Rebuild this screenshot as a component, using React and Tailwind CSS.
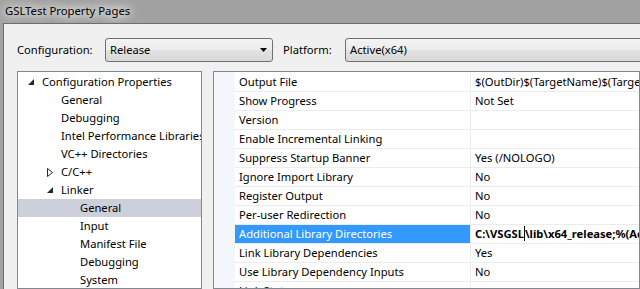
import React from "react";

const font = { fontFamily: '"Noto Sans", "Open Sans", sans-serif' };

function Arrow() {
  return (
    <svg width="7" height="4" viewBox="0 0 7 4" className="shrink-0">
      <path d="M0 0H7L3.5 4Z" fill="#000" />
    </svg>
  );
}

function Combo({ text, className, arrow }) {
  return (
    <div
      className={
        "h-[24px] shrink-0 flex items-center rounded-[3px] border border-[#707070] bg-[linear-gradient(#f3f3f3_0%,#ececec_50%,#e2e2e2_51%,#d9d9d9_100%)] pl-[4px] pr-[5px] " +
        className
      }
    >
      <span className="flex-1 text-black">{text}</span>
      {arrow && <Arrow />}
    </div>
  );
}

function Expanded() {
  return (
    <svg width="6" height="6" viewBox="0 0 6 6">
      <path d="M6 0V6H0Z" fill="#262626" />
    </svg>
  );
}

function Collapsed() {
  return (
    <svg width="6" height="9" viewBox="0 0 6 9">
      <path d="M0.5 0.5L5.5 4.5L0.5 8.5Z" fill="none" stroke="#262626" strokeWidth="1" />
    </svg>
  );
}

const tree = [
  { t: "Configuration Properties", lvl: 0, icon: "exp" },
  { t: "General", lvl: 1 },
  { t: "Debugging", lvl: 1 },
  { t: "Intel Performance Libraries", lvl: 1 },
  { t: "VC++ Directories", lvl: 1 },
  { t: "C/C++", lvl: 1, icon: "col" },
  { t: "Linker", lvl: 1, icon: "exp" },
  { t: "General", lvl: 2, sel: true },
  { t: "Input", lvl: 2 },
  { t: "Manifest File", lvl: 2 },
  { t: "Debugging", lvl: 2 },
  { t: "System", lvl: 2 },
  { t: "Optimization", lvl: 2 },
];

const props = [
  ["Output File", "$(OutDir)$(TargetName)$(TargetExt)"],
  ["Show Progress", "Not Set"],
  ["Version", ""],
  ["Enable Incremental Linking", ""],
  ["Suppress Startup Banner", "Yes (/NOLOGO)"],
  ["Ignore Import Library", "No"],
  ["Register Output", "No"],
  ["Per-user Redirection", "No"],
  ["Additional Library Directories", "SEL"],
  ["Link Library Dependencies", "Yes"],
  ["Use Library Dependency Inputs", "No"],
  ["Link Status", ""],
];

export default function App() {
  return (
    <div className="w-[640px] h-[289px] overflow-hidden bg-[#a1a1a1] flex flex-col text-[11.2px]" style={font}>
      <div className="h-[23px] shrink-0 flex items-center pl-[5px]">
        <span className="text-[11.3px] text-black [text-shadow:0_0_8px_#fff,0_0_10px_#fff,0_0_14px_#fff]">
          GSLTest Property Pages
        </span>
      </div>
      <div className="flex-1 ml-[3px] border-l border-t border-[#6d6d6d] bg-[#f0f0f0] flex flex-col min-h-0">
        <div className="flex items-center pt-[14px] pl-[13px] h-[38px] shrink-0 text-black">
          <span className="w-[88px] shrink-0">Configuration:</span>
          <Combo text="Release" className="w-[168px]" arrow />
          <span className="ml-[10px] w-[62px] shrink-0">Platform:</span>
          <Combo text="Active(x64)" className="w-[320px]" />
        </div>
        <div className="flex mt-[9px] flex-1 min-h-0">
          <div className="ml-[13px] w-[185px] shrink-0 border border-[#828790] bg-white pt-[1px] overflow-hidden">
            {tree.map((r, i) => (
              <div
                key={i}
                className={
                  "h-[18px] flex items-center text-black whitespace-nowrap overflow-hidden " +
                  (r.sel ? "bg-[#cdd0da]" : "")
                }
              >
                <div
                  className={
                    "shrink-0 flex items-center justify-end pr-[8px] " +
                    (r.lvl === 0 ? "w-[24px]" : r.lvl === 1 ? "w-[43px]" : "w-[62px]")
                  }
                >
                  {r.icon === "exp" && <Expanded />}
                  {r.icon === "col" && <Collapsed />}
                </div>
                <span>{r.t}</span>
              </div>
            ))}
          </div>
          <div className="ml-[11px] flex-1 border border-[#828790] bg-white flex overflow-hidden min-w-0">
            <div className="w-[21px] shrink-0 bg-[#f3f6fb]" />
            <div className="flex-1 pt-[1px] min-w-0">
              {props.map(([n, v], i) => {
                const sel = v === "SEL";
                return (
                  <div key={i} className="h-[19px] flex border-b border-[#ececec]">
                    <div
                      className={
                        "w-[236px] shrink-0 pl-[4px] flex items-center border-r border-[#ececec] whitespace-nowrap " +
                        (sel ? "bg-[#3399ff] text-white" : "text-black")
                      }
                    >
                      {n}
                    </div>
                    <div className="flex-1 pl-[4px] flex items-center whitespace-nowrap overflow-hidden text-black">
                      {sel ? (
                        <span className="font-bold flex items-center">
                          C:\VSGSL
                          <span className="inline-block w-[1px] h-[15px] bg-black" />
                          \lib\x64_release;%(AdditionalLibraryDirectories)
                        </span>
                      ) : (
                        v
                      )}
                    </div>
                  </div>
                );
              })}
            </div>
          </div>
        </div>
      </div>
    </div>
  );
}
